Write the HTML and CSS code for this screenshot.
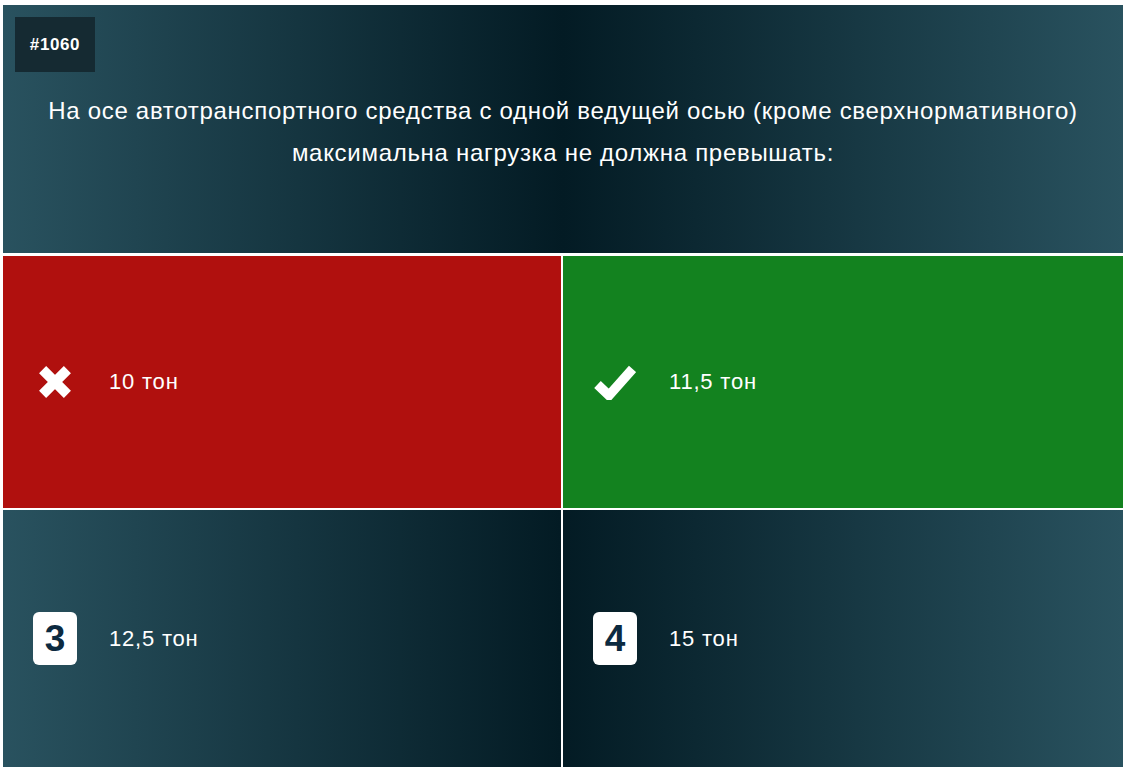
FILE: index.html
```html
<!DOCTYPE html>
<html lang="ru">
<head>
<meta charset="utf-8">
<title>Вопрос #1060</title>
<link rel="stylesheet" href="styles.css">
</head>
<body>
<div class="page">
  <header class="question">
    <div class="qnum">#1060</div>
    <p class="qtext">На осе автотранспортного средства с одной ведущей осью (кроме сверхнормативного) максимальна нагрузка не должна превышать:</p>
  </header>
  <div class="answers">
    <div class="answer wrong">
      <span class="icon">
        <svg width="32" height="32" viewBox="0 0 32 32"><path d="M3.6 3.6 L28.4 28.4 M28.4 3.6 L3.6 28.4" stroke="#fff" stroke-width="10" fill="none"/></svg>
      </span>
      <span class="label">10 тон</span>
    </div>
    <div class="answer right">
      <span class="icon">
        <svg width="42" height="35" viewBox="0 0 42 35"><path d="M3.5 19.5 L15 30.5 L38.5 4" stroke="#fff" stroke-width="9.5" fill="none"/></svg>
      </span>
      <span class="label">11,5 тон</span>
    </div>
    <div class="answer plain left">
      <span class="icon"><span class="num">3</span></span>
      <span class="label">12,5 тон</span>
    </div>
    <div class="answer plain rightside">
      <span class="icon"><span class="num">4</span></span>
      <span class="label">15 тон</span>
    </div>
  </div>
</div>
</body>
</html>
```

FILE: styles.css
```css
html, body {
  margin: 0;
  padding: 0;
  background: #ffffff;
}
body {
  font-family: "Liberation Sans", Arial, sans-serif;
  color: #ffffff;
}
.page {
  padding: 5px 3px 3px 3px;
  width: 1120px;
}
.question {
  height: 248px;
  box-sizing: border-box;
  background: linear-gradient(to right, #29525f 0%, #031b24 50%, #29525f 100%);
  padding: 12px 12px 0 12px;
  display: flex;
  flex-direction: column;
  align-items: flex-start;
}
.qnum {
  width: 80px;
  height: 55px;
  background: #152a32;
  font-weight: bold;
  font-size: 17px;
  letter-spacing: 0.6px;
  display: flex;
  align-items: center;
  justify-content: center;
}
.qtext {
  margin: 18px 0 0 0;
  align-self: stretch;
  text-align: center;
  font-size: 24px;
  letter-spacing: 0.7px;
  line-height: 42px;
  padding: 0 10px;
}
.answers {
  margin-top: 3px;
  display: grid;
  grid-template-columns: 558px 560px;
  grid-template-rows: 252px 257px;
  column-gap: 2px;
  row-gap: 2px;
}
.answer {
  display: flex;
  align-items: center;
  padding-left: 30px;
  gap: 32px;
  font-size: 22px;
  letter-spacing: 0.8px;
}
.icon {
  width: 44px;
  height: 53px;
  display: flex;
  align-items: center;
  justify-content: center;
  flex: none;
}
.wrong {
  background: #b0100e;
}
.right {
  background: #13821f;
}
.left {
  background: linear-gradient(to right, #29525f 0%, #031b24 100%);
}
.rightside {
  background: linear-gradient(to right, #031b24 0%, #29525f 100%);
}
.num {
  width: 44px;
  height: 53px;
  background: #ffffff;
  border-radius: 6px;
  color: #0c2a40;
  font-weight: bold;
  font-size: 37px;
  letter-spacing: 0;
  display: flex;
  align-items: center;
  justify-content: center;
}
.label {
  line-height: 26px;
}
```
